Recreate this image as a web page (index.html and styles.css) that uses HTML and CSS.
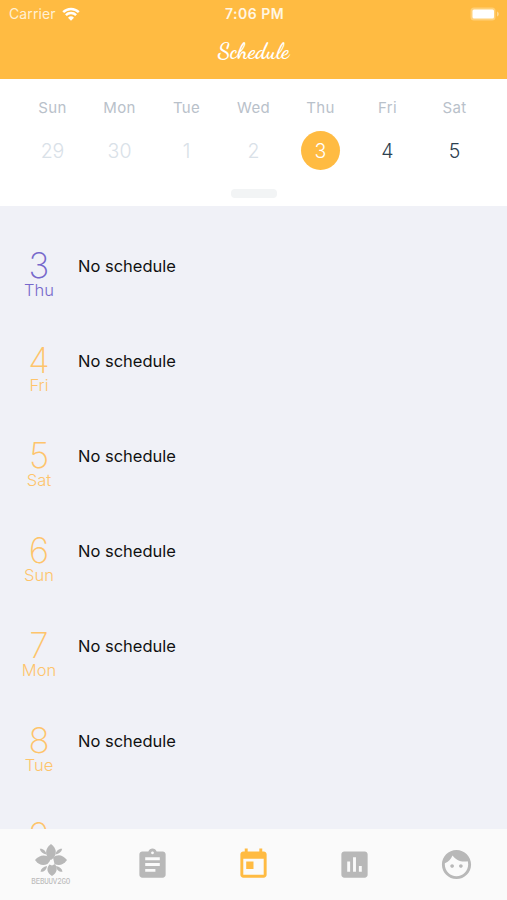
FILE: index.html
```html
<!DOCTYPE html>
<html lang="en">
<head>
    <meta charset="UTF-8">
    <meta name="viewport" content="width=device-width, initial-scale=1.0">
    <title>Schedule</title>
    <link rel="stylesheet" href="styles.css">
</head>
<body>
    <div class="app">
        <header class="header">
            <div class="status-bar">
                <div class="carrier">
                    <span>Carrier</span>
                    <svg class="wifi" viewBox="0 0 18 14">
                        <path d="M1.2 5.2a11.2 11.2 0 0 1 15.6 0M3.9 8.2a7.3 7.3 0 0 1 10.2 0" fill="none" stroke="#fff" stroke-width="2.5"/>
                        <path d="M9 13.8l-3-3a4.3 4.3 0 0 1 6 0z" fill="#fff"/>
                    </svg>
                </div>
                <div class="clock">7:06 PM</div>
                <svg class="battery" viewBox="0 0 30 14">
                    <rect x="0.5" y="0.5" width="25" height="13" rx="3.5" fill="#ffd078"/>
                    <rect x="2.5" y="2.5" width="21.5" height="9" rx="1.5" fill="#fff"/>
                    <path d="M27 4.6v4.8c1.2-.5 1.8-1.3 1.8-2.4s-.6-1.9-1.8-2.4z" fill="#ffd78f"/>
                </svg>
            </div>
            <h1 class="title">Schedule</h1>
        </header>

        <section class="calendar">
            <div class="week names">
                <span>Sun</span><span>Mon</span><span>Tue</span><span>Wed</span><span>Thu</span><span>Fri</span><span>Sat</span>
            </div>
            <div class="week dates">
                <span class="past">29</span>
                <span class="past">30</span>
                <span class="past">1</span>
                <span class="past">2</span>
                <span class="selected">3</span>
                <span>4</span>
                <span>5</span>
            </div>
            <div class="knob"></div>
        </section>

        <main class="agenda">
            <div class="row today">
                <div class="day"><span class="num">3</span><span class="name">Thu</span></div>
                <p class="empty">No schedule</p>
            </div>
            <div class="row">
                <div class="day"><span class="num">4</span><span class="name">Fri</span></div>
                <p class="empty">No schedule</p>
            </div>
            <div class="row">
                <div class="day"><span class="num">5</span><span class="name">Sat</span></div>
                <p class="empty">No schedule</p>
            </div>
            <div class="row">
                <div class="day"><span class="num">6</span><span class="name">Sun</span></div>
                <p class="empty">No schedule</p>
            </div>
            <div class="row">
                <div class="day"><span class="num">7</span><span class="name">Mon</span></div>
                <p class="empty">No schedule</p>
            </div>
            <div class="row">
                <div class="day"><span class="num">8</span><span class="name">Tue</span></div>
                <p class="empty">No schedule</p>
            </div>
            <div class="row">
                <div class="day"><span class="num">9</span></div>
            </div>
        </main>

        <nav class="tabs">
            <a class="tab brand">
                <svg class="flower" viewBox="0 0 32 32">
                    <path d="M16 0c5 3.5 6.500 9 2.500 14l-2.500 2-3-2C9.500 9 11 3.500 16 0z"/>
                    <path d="M0 16c4.500-5.500 11-6 16-1.500L14.500 17.500l-2 2.500C8 22 3.500 21 0 16z"/>
                    <path d="M32 16c-4.500-5.500-9.500-6-14-2.500l1.500 6.500C24 22 28.500 21 32 16z"/>
                    <path d="M17 32c-5-3-6-7.500-2.500-11.500l2.500 1 3-1.500c3 4.500 2 9-3 12z"/>
                    <path d="M4.800 4.800c3.500-.3 6 2 6.700 5.700-3.700-.5-6-2.500-6.700-5.700zM27.200 4.800c-3.500-.3-6 2-6.700 5.700 3.700-.5 6-2.500 6.700-5.700zM5.500 27.800c3.500.3 6-2 6.500-5.800-3.700.5-6 2.600-6.500 5.800zM27.500 27.800c-3.500.3-6-2-6.500-5.800 3.700.5 6 2.600 6.500 5.800z"/>
                </svg>
                <span class="brand-name">BEBUUV2GO</span>
            </a>
            <a class="tab">
                <svg viewBox="0 0 24 24"><path d="M19 3h-4.180C14.400 1.840 13.300 1 12 1c-1.300 0-2.400.84-2.820 2H5c-1.100 0-2 .9-2 2v14c0 1.100.9 2 2 2h14c1.100 0 2-.9 2-2V5c0-1.100-.9-2-2-2zm-7 0c.55 0 1 .45 1 1s-.45 1-1 1-1-.45-1-1 .45-1 1-1zm2 14H7v-2h7v2zm3-4H7v-2h10v2zm0-4H7V7h10v2z"/></svg>
            </a>
            <a class="tab active">
                <svg viewBox="0 0 24 24"><path d="M19 3h-1V1h-2v2H8V1H6v2H5c-1.110 0-1.990.9-1.990 2L3 19c0 1.100.89 2 2 2h14c1.100 0 2-.9 2-2V5c0-1.100-.9-2-2-2zm0 16H5V8h14v11zM7 10h5v5H7z"/></svg>
            </a>
            <a class="tab">
                <svg viewBox="0 0 24 24"><path d="M19 3H5c-1.100 0-2 .9-2 2v14c0 1.100.9 2 2 2h14c1.100 0 2-.9 2-2V5c0-1.100-.9-2-2-2zM9 17H7v-7h2v7zm4 0h-2V7h2v10zm4 0h-2v-4h2v4z"/></svg>
            </a>
            <a class="tab">
                <svg viewBox="0 0 24 24"><path d="M9 11.750c-.69 0-1.250.56-1.250 1.250s.56 1.250 1.250 1.250 1.250-.56 1.250-1.250-.56-1.250-1.250-1.250zm6 0c-.69 0-1.250.56-1.250 1.250s.56 1.250 1.250 1.250 1.250-.56 1.250-1.250-.56-1.250-1.250-1.250zM12 2C6.480 2 2 6.480 2 12s4.480 10 10 10 10-4.480 10-10S17.520 2 12 2zm0 18c-4.410 0-8-3.590-8-8 0-.29.02-.58.05-.86 2.360-1.050 4.230-2.980 5.210-5.370C11.070 8.330 14.050 10 17.420 10c.78 0 1.530-.09 2.250-.26.21.71.33 1.470.33 2.260 0 4.410-3.590 8-8 8z"/></svg>
            </a>
        </nav>
    </div>
</body>
</html>
```
FILE: styles.css
```css
* {
    box-sizing: border-box;
}
body {
    margin: 0;
    font-family: Inter, Roboto, sans-serif;
    background: #f0f1f7;
}
.app {
    display: flex;
    flex-direction: column;
    height: 900px;
    overflow: hidden;
}

/* header */
.header {
    height: 79px;
    background: #ffbb42;
    color: #fff;
    flex-shrink: 0;
}
.status-bar {
    display: grid;
    grid-template-columns: 1fr auto 1fr;
    align-items: center;
    height: 27px;
    padding: 0 7px 0 9px;
}
.carrier {
    display: flex;
    align-items: center;
    gap: 6px;
    font-size: 14px;
    color: #fff0d4;
    letter-spacing: 0.1px;
}
.wifi {
    width: 18px;
    height: 14px;
}
.clock {
    font-size: 14px;
    font-weight: 600;
    letter-spacing: 0.5px;
    color: #fff6e4;
}
.battery {
    width: 30px;
    height: 14px;
    justify-self: end;
}
.title {
    margin: 0;
    line-height: 49px;
    text-align: center;
    font-family: "Dancing Script", Pacifico, cursive;
    font-size: 22px;
    font-weight: 700;
}

/* week strip */
.calendar {
    height: 127px;
    padding: 19px 19px 0;
    background: #fff;
    flex-shrink: 0;
}
.week {
    display: grid;
    grid-template-columns: repeat(7, 1fr);
    justify-items: center;
    text-align: center;
}
.names {
    font-size: 15px;
    line-height: 20px;
    color: #b9c1ca;
    letter-spacing: 0.3px;
}
.dates {
    margin-top: 13px;
    font-size: 19.5px;
    font-weight: 300;
    line-height: 40px;
    color: #2d4150;
}
.dates .past {
    color: #d9e1e8;
}
.dates .selected {
    width: 39px;
    height: 39px;
    border-radius: 50%;
    background: #ffbb42;
    color: #fff;
}
.knob {
    width: 46px;
    height: 9px;
    margin: 18px auto 0;
    border-radius: 4px;
    background: #f2f4f5;
}

/* day list */
.agenda {
    flex: 1;
    min-height: 0;
    padding-top: 13px;
    overflow: hidden;
}
.row {
    display: flex;
    height: 95px;
    padding-top: 29px;
    color: #fec46b;
}
.row.today {
    color: #7668cb;
}
.day {
    display: flex;
    flex-direction: column;
    align-items: center;
    width: 78px;
}
.num {
    font-size: 35px;
    font-weight: 200;
    line-height: 34px;
}
.name {
    font-size: 16.5px;
    font-weight: 300;
    line-height: 16px;
}
.empty {
    margin: 0;
    font-size: 16.5px;
    line-height: 36px;
    color: #111;
}

/* bottom tabs */
.tabs {
    display: flex;
    height: 71px;
    background: #fafafa;
    flex-shrink: 0;
}
.tab {
    display: flex;
    flex: 1;
    justify-content: center;
    align-items: center;
    fill: #b8b8b8;
}
.tab svg {
    width: 35px;
    height: 35px;
}
.tab.active {
    fill: #ffbb42;
}
.brand {
    flex-direction: column;
    gap: 1px;
}
.tab .flower {
    width: 32px;
    height: 32px;
}
.brand-name {
    font-family: "Liberation Mono", monospace;
    font-size: 7.5px;
    line-height: 8px;
    letter-spacing: -0.2px;
    color: #b8b8b8;
    transform: scaleY(1.3);
}
```
